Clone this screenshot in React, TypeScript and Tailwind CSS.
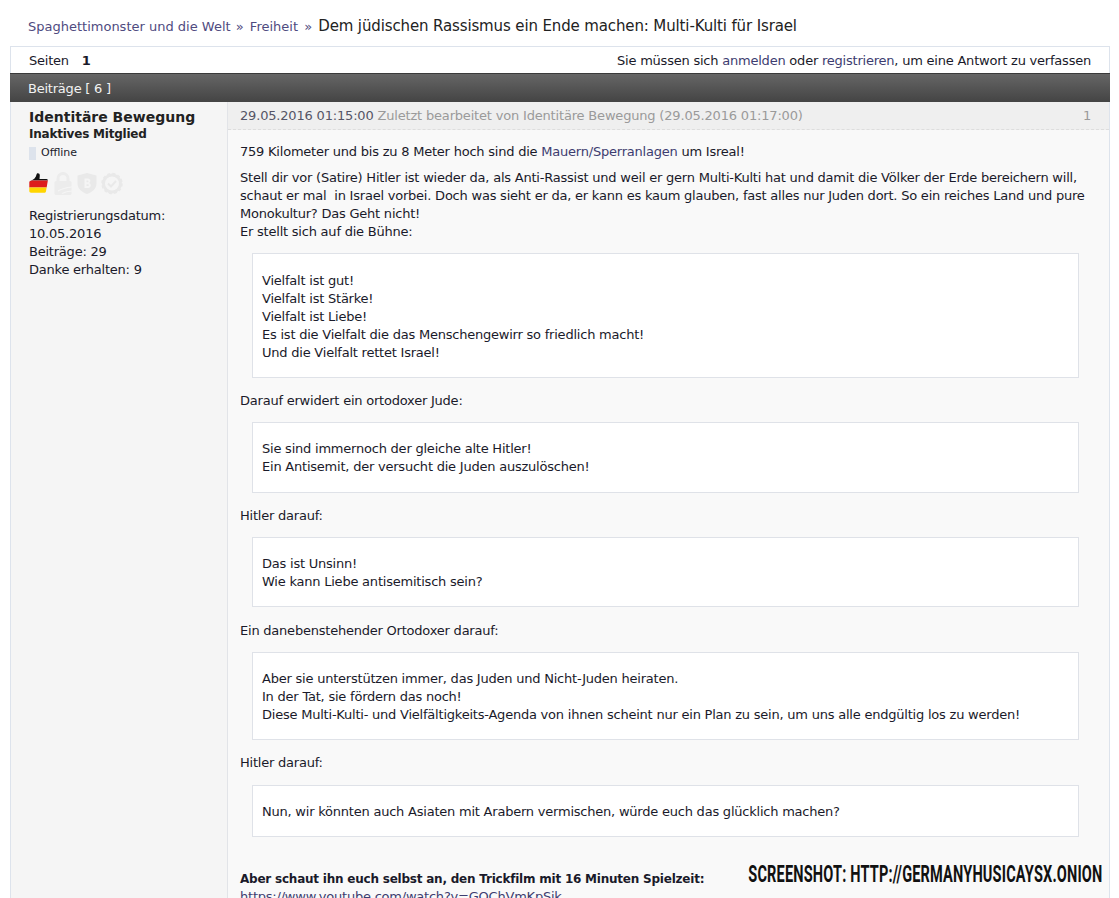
const font = "font-['DejaVu_Sans',Verdana,sans-serif]";

function Quote({ lines, className = "" }: { lines: string[]; className?: string }) {
  return (
    <div className={`mr-[12px] ml-[12px] border border-[#dfe2e8] bg-white px-[9px] ${className}`}>
      {lines.map((line) => (
        <p key={line}>{line}</p>
      ))}
    </div>
  );
}

function Badges() {
  return (
    <div className="mt-[10px] flex items-center">
      <svg width="20" height="23" viewBox="0 0 20 22">
        <defs>
          <clipPath id="thumb">
            <path d="M8 1c1.600-.6 2.800.4 2.800 2l-.3 3.600h7c1 0 1.500.8 1.300 1.700l-1.800 10.500c-.2 1-.9 1.500-1.800 1.500H2c-1 0-1.700-.7-1.700-1.700v-8.700c0-1 .7-1.500 1.500-1.700C4.500 7.300 7.200 5 7.500 2z" />
          </clipPath>
        </defs>
        <g clipPath="url(#thumb)">
          <rect width="20" height="8" fill="#111" />
          <rect y="8" width="20" height="7" fill="#dd1c1c" />
          <rect y="15" width="20" height="7" fill="#ffd500" />
        </g>
      </svg>
      <svg width="18" height="23" viewBox="0 0 18 23" fill="none" className="ml-[5px] text-[#ececec]">
        <path d="M4 10V6.500a5 5 0 0 1 10 0V10" stroke="currentColor" strokeWidth="3" />
        <rect x="0.500" y="9" width="17" height="14" rx="1.500" fill="currentColor" />
        <path d="M4 19c4-2.500 9-3.500 14-4M8 21.500c3-1.500 6-2.200 10-2.500" stroke="#f5f5f5" strokeWidth="1.200" />
      </svg>
      <svg width="20" height="23" viewBox="0 0 20 22" className="ml-[5px] text-[#e9e9e9]">
        <path d="M10 .5 19.500 3v8c0 5-4 8.500-9.500 10.500C4.500 19.500.5 16 .5 11V3z" fill="currentColor" />
        <path d="M7.500 6h3.500c3 0 3 4 .8 4.500 2.700.4 2.700 5-.8 5H7.500zM9.500 8v1.800h1.300c1 0 1-1.800 0-1.800zm0 3.800v1.800h1.500c1.200 0 1.200-1.800 0-1.800z" fill="#f5f5f5" fillRule="evenodd" />
      </svg>
      <svg width="22" height="23" viewBox="0 0 22 22" fill="none" className="ml-[4px] text-[#e9e9e9]">
        <circle cx="11" cy="11" r="8.500" stroke="currentColor" strokeWidth="3" />
        <circle cx="11" cy="11" r="10" stroke="currentColor" strokeWidth="1.500" strokeDasharray="3 2.240" />
        <path d="m7 11 3 3 5-5.500" stroke="currentColor" strokeWidth="2" />
      </svg>
    </div>
  );
}

export default function App() {
  return (
    <div className={`${font} relative h-[898px] overflow-hidden bg-white text-[13px] leading-[18px] text-[#1a1a2a]`}>
      <div className="h-[46px] px-[28px] pt-[16px] leading-[20px] whitespace-pre">
        <a className="text-[#4f4b7f]">Spaghettimonster und die Welt</a>
        <span className="mr-[2px] ml-[1px] text-[#4f4b7f]"> » </span>
        <a className="text-[#4f4b7f]">Freiheit</a>
        <span className="mr-[2px] ml-[2px] text-[#4f4b7f]"> » </span>
        <span className="text-[15px] tracking-[-0.13px] text-[#222]">Dem jüdischen Rassismus ein Ende machen: Multi-Kulti für Israel</span>
      </div>

      <div className="mr-[9px] ml-[10px] border-x border-t border-[#dde3ec] tracking-[-0.22px]">
        <div className="flex h-[26px] items-center justify-between px-[18px] pt-[1px]">
          <div>
            Seiten <b className="ml-[9px]">1</b>
          </div>
          <div>
            Sie müssen sich <a className="text-[#3d3d70]">anmelden</a> oder <a className="text-[#3d3d70]">registrieren</a>, um eine Antwort zu verfassen
          </div>
        </div>

        <div className="-mx-px flex h-[29px] items-center border-t border-[#3a3a3a] bg-gradient-to-b from-[#666666] to-[#444444] px-[18px] pt-[1px] text-[#f2f2f2]">
          Beiträge [ 6 ]
        </div>

        <div className="flex">
          <aside className="w-[217px] shrink-0 border-r border-[#e2e4e8] bg-[#f5f5f5] px-[18px] pt-[6px]">
            <h2 className="text-[14px] leading-[19px] font-bold tracking-normal text-[#222]">Identitäre Bewegung</h2>
            <p className="text-[12px] leading-[15px] font-bold text-[#222]">Inaktives Mitglied</p>
            <div className="mt-[2px] flex items-center gap-[5px] text-[11px] tracking-normal">
              <span className="h-[13px] w-[7px] bg-[#dde3ec]" />
              Offline
            </div>
            <Badges />
            <div className="mt-[12px]">
              <p>Registrierungsdatum:</p>
              <p>10.05.2016</p>
              <p>Beiträge: 29</p>
              <p>Danke erhalten: 9</p>
            </div>
          </aside>

          <main className="min-w-0 flex-1 bg-[#f9f9f9]">
            <div className="flex h-[28px] items-center justify-between border-b border-dashed border-[#dddddd] bg-[#efefef] pt-[1px] pr-[18px] pl-[12px] tracking-[-0.18px] text-[#9a9a9a]">
              <div>
                <span className="text-[#555566]">29.05.2016 01:15:00</span> Zuletzt bearbeitet von Identitäre Bewegung (29.05.2016 01:17:00)
              </div>
              <span>1</span>
            </div>

            <div className="pt-[13px] pr-[18px] pl-[12px]">
              <p className="mb-[8px]">
                759 Kilometer und bis zu 8 Meter hoch sind die <a className="text-[#3d3d70]">Mauern/Sperranlagen</a> um Isreal!
              </p>
              <p>Stell dir vor (Satire) Hitler ist wieder da, als Anti-Rassist und weil er gern Multi-Kulti hat und damit die Völker der Erde bereichern will, schaut er mal{"\u00a0"} in Israel vorbei. Doch was sieht er da, er kann es kaum glauben, fast alles nur Juden dort. So ein reiches Land und pure Monokultur? Das Geht nicht!</p>
              <p>Er stellt sich auf die Bühne:</p>
              <Quote
                className="mt-[12px] mb-[14px] pt-[18px] pb-[15px]"
                lines={[
                  "Vielfalt ist gut!",
                  "Vielfalt ist Stärke!",
                  "Vielfalt ist Liebe!",
                  "Es ist die Vielfalt die das Menschengewirr so friedlich macht!",
                  "Und die Vielfalt rettet Israel!",
                ]}
              />
              <p>Darauf erwidert ein ortodoxer Jude:</p>
              <Quote
                className="mt-[12px] mb-[14px] pt-[17px] pb-[16px]"
                lines={["Sie sind immernoch der gleiche alte Hitler!", "Ein Antisemit, der versucht die Juden auszulöschen!"]}
              />
              <p>Hitler darauf:</p>
              <Quote className="mt-[12px] mb-[15px] pt-[17px] pb-[15px]" lines={["Das ist Unsinn!", "Wie kann Liebe antisemitisch sein?"]} />
              <p>Ein danebenstehender Ortodoxer darauf:</p>
              <Quote
                className="mt-[12px] mb-[14px] pt-[17px] pb-[15px]"
                lines={[
                  "Aber sie unterstützen immer, das Juden und Nicht-Juden heiraten.",
                  "In der Tat, sie fördern das noch!",
                  "Diese Multi-Kulti- und Vielfältigkeits-Agenda von ihnen scheint nur ein Plan zu sein, um uns alle endgültig los zu werden!",
                ]}
              />
              <p>Hitler darauf:</p>
              <Quote className="mt-[13px] pt-[17px] pb-[15px]" lines={["Nun, wir könnten auch Asiaten mit Arabern vermischen, würde euch das glücklich machen?"]} />
              <p className="mt-[33px] text-[12px] font-bold">Aber schaut ihn euch selbst an, den Trickfilm mit 16 Minuten Spielzeit:</p>
              <a className="text-[#3d3d70]">https://www.youtube.com/watch?v=GOChVmKpSik</a>
            </div>
          </main>
        </div>
      </div>

      <div className="absolute top-[860px] right-[17px] origin-right scale-x-[0.605] font-['Roboto',sans-serif] text-[24px] leading-[28px] font-bold tracking-[0.3px] whitespace-nowrap text-[#111]">
        SCREENSHOT: HTTP://GERMANYHUSICAYSX.ONION
      </div>
    </div>
  );
}
